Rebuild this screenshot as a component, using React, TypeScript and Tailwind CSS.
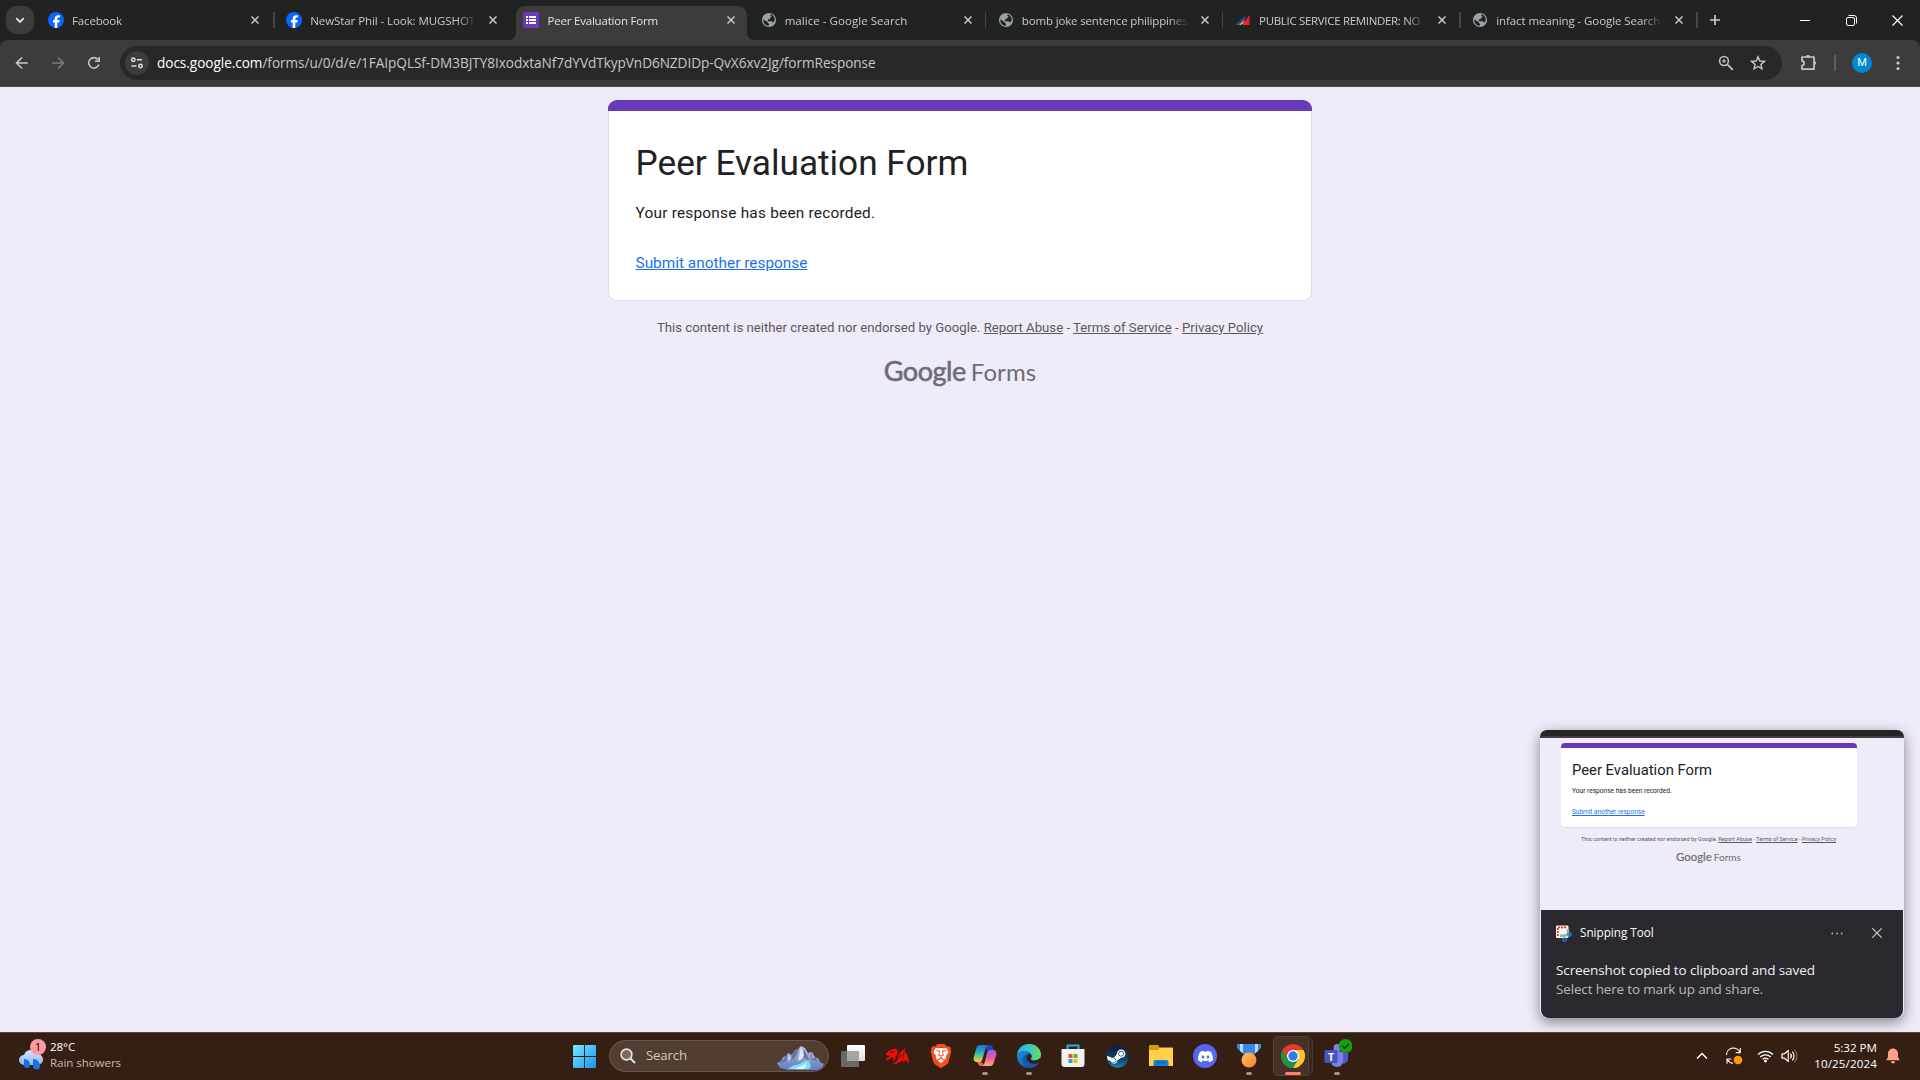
import React from "react";
import { SiBrave, SiDiscord } from "react-icons/si";
import { FaSteam } from "react-icons/fa";

const UI = "font-['Open_Sans','Noto_Sans',sans-serif]";

function FacebookIcon() {
  return (
    <svg width="16" height="16" viewBox="0 0 16 16">
      <circle cx="8" cy="8" r="8" fill="#0866ff" />
      <path d="M6.7 15.9v-5.4H5V8.1h1.7V7c0-2.6 1.1-3.8 3.6-3.8.5 0 1.2.1 1.6.2v2.1c-.2 0-.5 0-.9 0-1.2 0-1.7.5-1.7 1.7v.9h2.4l-.4 2.4h-2v5.4z" fill="#fff" />
    </svg>
  );
}

function FormsIcon() {
  return (
    <svg width="16" height="16" viewBox="0 0 16 16">
      <rect width="16" height="16" rx="1" fill="#673ab7" />
      <path d="M3 4h2v2H3zM6 4h7v2H6zM3 7h2v2H3zM6 7h7v2H6zM3 10h2v2H3zM6 10h7v2H6z" fill="#fff" />
    </svg>
  );
}

function GlobeIcon() {
  return (
    <svg width="16" height="16" viewBox="0 0 16 16">
      <circle cx="8" cy="8" r="7.1" fill="#9aa0a6" />
      <path d="M2.3 7.2 5 9.3c.8.6 1.8.3 1.8 1.2 0 .8.5 1 1.1 1.1v2.2C4.7 13.7 1.9 11.2 2.3 7.2zM9.6 2.3c2.5.7 4 2.7 4.2 5.2-.3 1.6-1.2 2.7-1.9 3.1-.5-.9-.8-1.4-1.9-1.4H7.8c-.6 0-1.1-.4-1-1 0-.6.5-.9 1.1-.9.7 0 .9-.4.9-.9 0-.7.6-.8 1.2-1 .7-.3.5-1.1-.1-1.4-.6-.3-.9-.9-.3-1.7z" fill="#202322" />
    </svg>
  );
}

function PalIcon() {
  return (
    <svg width="16" height="16" viewBox="0 0 16 16">
      <path d="M0 13 10 4v5l-5 4z" fill="#35459c" />
      <path d="M7 13l7.500-10v10z" fill="#ee2030" />
      <path d="M4 13l5-4.500L8.500 11l-3 2z" fill="#f9c83a" />
    </svg>
  );
}

function CloseGlyph() {
  return (
    <svg width="8" height="8" viewBox="0 0 8 8" stroke="#c7c9c8" strokeWidth="1.5">
      <path d="M.5.5l7 7M7.5.5l-7 7" />
    </svg>
  );
}

type TabInfo = { icon: React.ReactNode; title: string; track: string; pad?: string; active?: boolean; sep?: boolean };

const tabs: TabInfo[] = [
  { icon: <FacebookIcon />, title: "Facebook", track: "tracking-[-0.15px]", pad: "pl-[10.5px]", sep: true },
  { icon: <FacebookIcon />, title: "NewStar Phil - Look: MUGSHOT", track: "tracking-[-0.08px]" },
  { icon: <FormsIcon />, title: "Peer Evaluation Form", track: "tracking-[-0.2px]", active: true },
  { icon: <GlobeIcon />, title: "malice - Google Search", track: "tracking-[0.05px]", sep: true },
  { icon: <GlobeIcon />, title: "bomb joke sentence philippines", track: "tracking-[-0.16px]", sep: true },
  { icon: <PalIcon />, title: "PUBLIC SERVICE REMINDER: NO", track: "tracking-[-0.32px]", sep: true },
  { icon: <GlobeIcon />, title: "infact meaning - Google Search", track: "tracking-[-0.08px]", sep: true },
];

function Tab({ icon, title, track, pad, active, sep }: TabInfo) {
  return (
    <div className="relative h-[40px] w-[237.2px] shrink-0">
      {active && (
        <svg className="absolute left-[-4px] top-[6px]" width="247" height="34" viewBox="0 0 247 34">
          <path d="M0 34c5 0 8-3 8-8V10C8 4 12 0 18 0h211c6 0 10 4 10 10v16c0 5 3 8 8 8z" fill="#3c3c3c" />
        </svg>
      )}
      <div className={`relative flex h-[40px] items-center ${pad ?? "pl-[11.6px]"}`}>
        <span className="w-4 shrink-0">{icon}</span>
        <span className={`ml-2 mt-[2px] w-[167px] shrink-0 whitespace-nowrap text-[11.5px] leading-[18px] ${track} ${active ? "text-[#e3e3e3]" : "text-[#c9cbca]"} [mask-image:linear-gradient(to_right,#000_88%,transparent)]`}>
          {title}
        </span>
        <span className="ml-[12.2px]"><CloseGlyph /></span>
      </div>
      {sep && <span className="absolute right-0 top-3 h-4 w-[1.5px] bg-[#454746]" />}
    </div>
  );
}

function TabStrip() {
  return (
    <div className="flex h-[40px] items-center bg-[#202322]">
      <div className="ml-[6px] mr-[3.5px] flex h-7 w-7 shrink-0 items-center justify-center rounded-[10px] bg-[#3c3c3c]">
        <svg width="10" height="10" viewBox="0 0 10 10" fill="none" stroke="#e3e3e3" strokeWidth="1.8"><path d="M1.2 3.2 5 7l3.800-3.800" /></svg>
      </div>
      {tabs.map((t) => <Tab key={t.title} {...t} />)}
      <svg className="ml-[12px] shrink-0" width="10" height="10" viewBox="0 0 10 10" stroke="#d0d2d1" strokeWidth="1.6"><path d="M5 0v10M0 5h10" /></svg>
      <div className="ml-auto flex shrink-0 items-center">
        <div className="flex w-[46px] justify-center"><span className="h-px w-[10px] bg-white" /></div>
        <div className="flex w-[46px] justify-center">
          <svg width="11" height="11" viewBox="0 0 11 11" fill="none" stroke="#fff"><rect x=".5" y="2.5" width="8" height="8" rx="1.5" /><path d="M2.500.5H8A2.500 2.500 0 0 1 10.500 3v5.500" /></svg>
        </div>
        <div className="flex w-[46px] justify-center">
          <svg width="11" height="11" viewBox="0 0 11 11" stroke="#fff" strokeWidth="1.1"><path d="M.5.5l10 10M10.500.5l-10 10" /></svg>
        </div>
      </div>
    </div>
  );
}

function Toolbar() {
  return (
    <div className="bg-[#202322]">
      <div className="flex h-[47px] items-center rounded-t-[8px] border-b border-[#4b4b4b] bg-[#3c3c3c]">
        <svg className="ml-[14px]" width="16" height="16" viewBox="0 0 16 16" fill="none" stroke="#c7c7c7" strokeWidth="1.6"><path d="M13.800 8H3M8 2.500 2.500 8 8 13.500" /></svg>
        <svg className="ml-5" width="16" height="16" viewBox="0 0 16 16" fill="none" stroke="#7b7b7b" strokeWidth="1.6"><path d="M2.200 8H13M8 2.500 13.500 8 8 13.500" /></svg>
        <svg className="ml-5" width="16" height="16" viewBox="0 0 16 16" fill="none" stroke="#c7c7c7" strokeWidth="1.6"><path d="M12.800 9.500A5.200 5.200 0 1 1 12 4.700" /><path d="M13.200 2v4.200H9" /></svg>
        <div className="ml-[18px] flex h-[34px] w-[1662px] items-center rounded-full bg-[#282828] pl-[5px]">
          <span className="flex h-6 w-6 items-center justify-center rounded-full bg-[#3c3c3c]">
            <svg width="14" height="14" viewBox="0 0 14 14" fill="none" stroke="#dedede" strokeWidth="1.5"><circle cx="3.300" cy="3.800" r="1.700" /><path d="M6.800 3.800H12M1.500 10h5" /><circle cx="10.500" cy="10" r="1.700" /></svg>
          </span>
          <span className="ml-2 whitespace-nowrap text-[13.6px] leading-5 tracking-[-0.045px] text-[#c7c7c7]">
            <span className="text-white">docs.google.com</span>/forms/u/0/d/e/1FAIpQLSf-DM3BJTY8IxodxtaNf7dYVdTkypVnD6NZDIDp-QvX6xv2Jg/formResponse
          </span>
          <svg className="ml-auto" width="16" height="16" viewBox="0 0 16 16" fill="none" stroke="#c7c7c7" strokeWidth="1.5"><circle cx="6" cy="6" r="4.4" /><path d="M9.300 9.300 14.800 14.800" strokeWidth="1.8" /><path d="M6 4v4M4 6h4" strokeWidth="1.2" /></svg>
          <svg className="ml-4 mr-4" width="16" height="16" viewBox="0 0 16 16" fill="none" stroke="#c7c7c7" strokeWidth="1.4"><path d="M8 1.800l1.800 4.200 4.600.4-3.500 3 1.100 4.500L8 11.500l-4 2.400 1.100-4.500-3.500-3L6.200 6z" /></svg>
        </div>
        <svg className="ml-[18px]" width="18" height="18" viewBox="0 0 18 18" fill="none" stroke="#c7c7c7" strokeWidth="1.7"><path d="M2 3h12v12.200H2v-3.700c2.800-.2 2.800-4.400 0-4.600z" strokeLinejoin="round" /><path d="M6 3a2 2 0 0 1 4 0zM14 7a2 2 0 0 1 0 4z" fill="#c7c7c7" stroke="none" /></svg>
        <span className="ml-[16px] h-4 w-[2px] bg-[#5f5f5f]" />
        <span className="ml-4 flex h-5 w-5 items-center justify-center rounded-full bg-[#0288d1] font-[Roboto] text-[11px] text-white">M</span>
        <svg className="ml-[24px]" width="4" height="16" viewBox="0 0 4 16" fill="#c7c7c7"><circle cx="2" cy="2.5" r="1.6" /><circle cx="2" cy="8" r="1.6" /><circle cx="2" cy="13.5" r="1.6" /></svg>
      </div>
    </div>
  );
}

function FormsPage() {
  return (
    <main className="flex flex-1 flex-col items-center bg-[#f0ebf8] pt-[13px] font-[Roboto]">
      <section className="h-[201px] w-[704px] overflow-hidden rounded-[9px]">
        <div className="h-[11px] bg-[#673ab7]" />
        <div className="flex h-[190px] flex-col rounded-b-[9px] border border-t-0 border-[#dadce0] bg-white px-[26.5px]">
          <h1 className="mt-[29px] text-[35.2px] leading-[46px] text-[#202124]">Peer Evaluation Form</h1>
          <p className="mt-[16px] text-[15.4px] leading-[22px] tracking-[0.22px] text-[#202124]">Your response has been recorded.</p>
          <p className="mt-7 text-[15.4px] leading-[22px] text-[#1a73e8] underline">Submit another response</p>
        </div>
      </section>
      <p className="mt-[18px] text-[13.2px] leading-[18px] text-[#5b575f]">
        This content is neither created nor endorsed by Google. <span className="underline">Report Abuse</span> - <span className="underline">Terms of Service</span> - <span className="underline">Privacy Policy</span>
      </p>
      <div className="mt-[16px] flex h-[36px] items-baseline text-[#6f6b75]">
        <span className="font-[Lato] text-[27px] leading-[36px] tracking-[-0.45px] [-webkit-text-stroke:0.6px_#6f6b75]">Google</span>
        <span className="ml-[5px] font-[Lato] text-[24px] leading-[36px] tracking-[0.1px]">Forms</span>
      </div>
    </main>
  );
}

function Toast() {
  return (
    <aside className="absolute left-[1540px] top-[730px] w-[364px] rounded-[8px] shadow-[0_4px_14px_rgba(0,0,0,0.45)]">
      <div className="flex h-[180px] flex-col overflow-hidden rounded-t-[7px] bg-[#f0ebf8] font-[Roboto]">
        <div className="h-2 shrink-0 border-b-[2px] border-[#3f3f3f] bg-[#232625]" />
        <div className="ml-[21px] mt-[5px] h-[85px] w-[296px] shrink-0 overflow-hidden rounded-[4px] border-b border-[#dddde4] bg-white">
          <div className="h-[5px] bg-[#673ab7]" />
          <div className="pl-[11px]">
            <div className="mt-[12px] text-[14.8px] leading-[20px] text-[#202124]">Peer Evaluation Form</div>
            <div className="mt-[6px] text-[6.6px] leading-[10px] text-[#202124]">Your response has been recorded.</div>
            <div className="mt-[11px] text-[6.5px] leading-[10px] text-[#1a73e8] underline">Submit another response</div>
          </div>
        </div>
        <div className="ml-[41px] mt-[7px] whitespace-nowrap text-[5.55px] leading-[8px] text-[#5b575f]">
          This content is neither created nor endorsed by Google. <span className="underline">Report Abuse</span> - <span className="underline">Terms of Service</span> - <span className="underline">Privacy Policy</span>
        </div>
        <div className="ml-[136px] mt-[6px] flex items-baseline whitespace-nowrap font-[Lato] leading-[16px] text-[#6f6b75]">
          <span className="text-[11.4px] [-webkit-text-stroke:0.2px_#6f6b75]">Google</span><span className="ml-[2px] text-[10px]">Forms</span>
        </div>
      </div>
      <div className="mx-px h-[108px] rounded-b-[8px] bg-[#2b282f] px-[15px] pt-[13px]">
        <div className="flex h-5 items-center">
          <svg width="16" height="17" viewBox="0 0 16 17"><rect width="12.5" height="12.5" y=".5" rx="1" fill="#f3f3f3" /><path d="M1.800 11V2.300H11" fill="none" stroke="#d83b01" strokeWidth="1.7" strokeDasharray="2 1" /><path d="M4 11l8-1V4" fill="none" stroke="#a8a8ac" strokeWidth="2.5" /><circle cx="13.500" cy="9.500" r="1.700" fill="none" stroke="#1490df" strokeWidth="1.3" /><circle cx="8.500" cy="14.500" r="1.700" fill="none" stroke="#1490df" strokeWidth="1.3" /></svg>
          <span className="ml-2 text-[11.7px] text-white">Snipping Tool</span>
          <svg className="ml-auto" width="12" height="3" viewBox="0 0 12 3" fill="#b5b4b7"><circle cx="1.300" cy="1.500" r=".9" /><circle cx="6" cy="1.500" r=".9" /><circle cx="10.700" cy="1.500" r=".9" /></svg>
          <svg className="ml-[29px] mr-[6px]" width="10" height="10" viewBox="0 0 10 10" stroke="#cfced1" strokeWidth="1.2"><path d="M.3.3l9.400 9.400M9.700.3.3 9.700" /></svg>
        </div>
        <div className="mt-[18px] text-[13.5px] leading-[19px] tracking-[-0.1px] text-[#f1f1f2]">Screenshot copied to clipboard and saved</div>
        <div className="text-[13.5px] leading-[19px] tracking-[-0.16px] text-[#b9b8bb]">Select here to mark up and share.</div>
      </div>
    </aside>
  );
}

function Weather() {
  return (
    <div className="flex w-[200px] items-center pb-[2px] pl-[18px]">
      <div className="relative h-[32px] w-[28px]">
        <svg width="28" height="32" viewBox="0 0 28 32">
          <defs><linearGradient id="cloud" x2="0" y2="1"><stop stopColor="#d9e6fb" /><stop offset="1" stopColor="#8fb4ee" /></linearGradient></defs>
          <path d="M6 26a5 5 0 0 1 0-10 7 7 0 0 1 13-1 5.500 5.500 0 0 1 1 11z" fill="url(#cloud)" />
          <path d="M6 20c4 0 6 3 6 6a3 3 0 0 1-6 0zM15 20c5 0 7 4 7 7a3.300 3.300 0 0 1-7 0z" fill="#1473e6" />
        </svg>
        <span className="absolute left-[12px] top-0 flex h-4 w-4 items-center justify-center rounded-full bg-[#ff99a4] text-[11px] text-black">1</span>
      </div>
      <div className="ml-[4px] whitespace-nowrap text-[11.6px] leading-[16px] tracking-[-0.08px]">
        <div className="text-white">28°C</div>
        <div className="text-[#c2bbb8]">Rain showers</div>
      </div>
    </div>
  );
}

function Cell({ children, run, wide }: { children: React.ReactNode; run?: boolean; wide?: boolean }) {
  return (
    <div className="relative flex h-10 w-10 items-center justify-center">
      {wide && <span className="absolute left-[6px] top-0 h-10 w-[34px] rounded-[5px] border border-[#4a392f] bg-[#3b271b]" />}
      {wide && <span className="absolute left-0 top-0 h-10 w-[36px] rounded-[5px] border border-[#55433a] bg-[#453126]" />}
      <div className="relative">{children}</div>
      {run && <span className="absolute bottom-px left-[17px] h-[3px] w-[6px] rounded-full bg-[#9d938e]" />}
      {wide && <span className="absolute bottom-px left-3 h-[3px] w-4 rounded-full bg-[#ff8168]" />}
    </div>
  );
}

function TaskIcons() {
  return (
    <div className="flex items-center gap-1">
      <Cell>
        <svg width="24" height="24" viewBox="0 0 24 24"><defs><linearGradient id="tv" x2="0" y2="1"><stop stopColor="#fff" /><stop offset="1" stopColor="#dedede" /></linearGradient></defs><rect x="6" y="1" width="18" height="16" rx="1" fill="url(#tv)" /><rect y="7" width="18" height="16" rx="1" fill="#6b6967" /><path d="M6 7h12v10H6z" fill="#a6a5a4" /></svg>
      </Cell>
      <Cell>
        <svg width="24" height="24" viewBox="0 0 24 24" fill="#f40b0b"><path d="M.5 10 3 7.500 5.500 6 12 4l-2 1.800 4-.3-2.500 1.800 2.800 1.200-2.600.7 1.500 2.500-2.200-.7-.5 4-2.500 2.500 1-3.500-2.500-.5L3 16l-2.500.5 2-3 3.500-1.500-3.500-.5zM14 10l2.500-3L21 4l-1.500 3.500 2.500 3 1.500 4L24 20l-2.500-3.500-1.500-.5-1 3-1.500-3-2 1.500L11 20l-5-1 4-.5 3-3z" /><path d="M5 8.500l3.500-1-1 1.400zM16 9.500l-1 4.500M19 8l-1 7" fill="none" stroke="#351f13" strokeWidth=".8" /></svg>
      </Cell>
      <Cell>
        <div className="relative h-6 w-6">
          <svg className="absolute left-0 top-0" width="24" height="24" viewBox="0 0 24 24"><path d="M6 4h12l2 5-3 9-5 4-5-4-3-9z" fill="#fff" /></svg>
          <SiBrave className="absolute left-0 top-0 h-6 w-6 text-[#ff4a1c]" />
        </div>
      </Cell>
      <Cell run>
        <svg width="24" height="24" viewBox="0 0 24 24">
          <defs>
            <linearGradient id="cpa" x2="0" y2="1"><stop stopColor="#1a6fe0" /><stop offset=".45" stopColor="#25b3c0" /><stop offset="1" stopColor="#f1d43a" /></linearGradient>
            <linearGradient id="cpb" x2="0" y2="1"><stop stopColor="#a05bf0" /><stop offset=".5" stopColor="#e75aa0" /><stop offset="1" stopColor="#ffb07a" /></linearGradient>
          </defs>
          <path d="M14 1h3c2 0 2.500 1.500 3 3l1 3h-5c-2 0-3-2-3.500-4z" fill="#1b46b8" />
          <path d="M7 1h8c-2 1-2.500 3-3 5L9.500 15c-.5 2-1.500 3-3 3H4c-3 0-4-2.500-3.200-5L3 5c.8-2.500 2-4 4-4z" fill="url(#cpa)" />
          <path d="M17 22H9c2-1 2.500-3 3-5l2-8c.5-2 1.500-3 3-3H20c3 0 4 2.500 3.200 5L21 18c-.8 2.500-2 4-4 4z" fill="url(#cpb)" />
          <path d="M10 22H8c-2 0-2.500-1.500-3-2.500l-.8-1.500H7c2 0 3 1 3.500 2.500z" fill="#f36a3a" />
        </svg>
      </Cell>
      <Cell run>
        <svg width="24" height="24" viewBox="0 0 24 24">
          <defs>
            <linearGradient id="eg1"><stop stopColor="#28a8e8" /><stop offset=".5" stopColor="#35c9c4" /><stop offset="1" stopColor="#6cdd52" /></linearGradient>
            <linearGradient id="eg2" x2="1" y2="1"><stop stopColor="#1b9de2" /><stop offset="1" stopColor="#0f4a9c" /></linearGradient>
          </defs>
          <circle cx="12" cy="12" r="12" fill="url(#eg2)" />
          <path d="M.2 10C1.200 4 6 0 12 0c7 0 12 5 12 10.500 0 3.500-3 6-6.500 6-2.300 0-3.800-.8-3.800-1.600 0-.6 1-1 1-2.700C14.700 9 11 7 7.500 7 4.500 7 1.500 8.200.2 10z" fill="url(#eg1)" />
          <path d="M14.700 12.200c0 1.700-1 2.100-1 2.700 0 .8 1.500 1.600 3.800 1.600 2 0 4-.8 5.200-2.200l1.300.7-1.500 3.500c-1.500 1.500-9 2.500-12-1.500-2-3-1-6 1.500-7.500 1.500.2 2.700 1.500 2.700 2.700z" fill="#351f13" />
          <path d="M9 13c0 5 4 7.500 8 7.500 2 0 4-1 5.200-2A12 12 0 0 1 12 24c-4 0-7-4-6.500-8C6 12.500 8 10 12 9.500 10 10 9 11.500 9 13z" fill="#1459ae" />
        </svg>
      </Cell>
      <Cell>
        <svg width="24" height="24" viewBox="0 0 24 24"><path d="M6.500 6V1.500h11V6" fill="none" stroke="#25b2f1" strokeWidth="2" strokeLinejoin="round" /><path d="M.5 5h23v15a3 3 0 0 1-3 3h-17a3 3 0 0 1-3-3z" fill="#f1f1f1" /><path d="M7.500 10h4v4h-4z" fill="#f25022" /><path d="M12.500 10h4v4h-4z" fill="#6bb022" /><path d="M7.500 15h4v4h-4z" fill="#1ba1e8" /><path d="M12.500 15h4v4h-4z" fill="#ffb902" /></svg>
      </Cell>
      <Cell>
        <div className="relative h-[23px] w-[23px]">
          <svg width="0" height="0" className="absolute"><defs><linearGradient id="steam" x2="0" y2="1"><stop stopColor="#111d3e" /><stop offset=".6" stopColor="#0c3f68" /><stop offset="1" stopColor="#1487b8" /></linearGradient></defs></svg>
          <span className="absolute inset-[1px] rounded-full bg-white" />
          <FaSteam className="absolute inset-0 h-[23px] w-[23px] fill-[url(#steam)]" />
        </div>
      </Cell>
      <Cell>
        <svg width="24" height="24" viewBox="0 0 24 24"><path d="M0 2a1 1 0 0 1 1-1h8l2 3v5H0z" fill="#d99b0b" /><path d="M0 6h9l2-2.500h12a1 1 0 0 1 1 1V22H0z" fill="#ffd04a" /><path d="M4.500 22v-4a2 2 0 0 1 2-2h11a2 2 0 0 1 2 2v4z" fill="#1484d0" /><path d="M8 18.500h8" stroke="#0b5c9c" strokeWidth="1.2" /></svg>
      </Cell>
      <Cell>
        <span className="flex h-6 w-6 items-center justify-center rounded-full bg-[#5865f2]"><SiDiscord className="h-[15px] w-[15px] text-white" /></span>
      </Cell>
      <Cell run>
        <svg width="24" height="24" viewBox="0 0 24 24"><defs><linearGradient id="md" x2="1" y2="1"><stop stopColor="#ffc45c" /><stop offset="1" stopColor="#f07f32" /></linearGradient></defs><path d="M0 0h24v4l-6 6H6L0 4z" fill="#3b86ea" /><path d="M3 0h3v9L3 7zM18 0h3v7l-3 2z" fill="#b8dcfb" /><circle cx="12" cy="16" r="7.5" fill="url(#md)" /></svg>
      </Cell>
      <Cell wide>
        <svg width="24" height="24" viewBox="0 0 24 24">
          <circle cx="12" cy="12" r="12" fill="#e33b2e" />
          <path d="M12 6h10.390A12 12 0 0 1 12 24l5.200-9z" fill="#fcc934" />
          <path d="M6.800 15 1.610 6A12 12 0 0 0 12 24l5.200-9z" fill="#1e9446" />
          <circle cx="12" cy="12" r="6" fill="#fff" /><circle cx="12" cy="12" r="4.7" fill="#2f7de9" />
        </svg>
      </Cell>
      <Cell run>
        <svg className="-mt-[6px]" width="30" height="30" viewBox="0 0 30 30">
          <circle cx="15.500" cy="10" r="4" fill="#7b83eb" /><path d="M18 15h8v7a4.500 4.500 0 0 1-8 2z" fill="#5059c9" /><path d="M9 14h12v9a6 6 0 0 1-12 0z" fill="#7b83eb" />
          <rect x="2.500" y="12" width="13" height="13" rx="1.500" fill="#4b53bc" />
          <text x="9" y="22.500" textAnchor="middle" fontSize="10.500" fontWeight="700" fill="#fff" fontFamily="Open Sans, sans-serif">T</text>
          <circle cx="23.500" cy="8" r="7" fill="#13a10e" /><path d="M20.500 8l2.200 2.200L26.800 6" fill="none" stroke="#0b2b0a" strokeWidth="1.5" />
        </svg>
      </Cell>
    </div>
  );
}

function Taskbar() {
  return (
    <footer className="flex h-12 items-center border-t border-[#574842] bg-[#351f13] pb-px">
      <Weather />
      <svg className="ml-[373px]" width="23" height="23" viewBox="0 0 23 23"><defs><linearGradient id="win" gradientUnits="userSpaceOnUse" x1="0" y1="0" x2="23" y2="23"><stop stopColor="#7ce8ff" /><stop offset="1" stopColor="#1296f5" /></linearGradient></defs><path d="M0 1a1 1 0 0 1 1-1h10v11H0zM12 0h10a1 1 0 0 1 1 1v10H12zM0 12h11v11H1a1 1 0 0 1-1-1zM12 12h11v10a1 1 0 0 1-1 1H12z" fill="url(#win)" /></svg>
      <div className="ml-[13px] mr-1 flex h-8 w-[220px] items-center rounded-full border border-[#6a564a] bg-[#513d32] pl-[10px] pr-1">
        <svg width="16" height="16" viewBox="0 0 16 16" fill="#796c65" stroke="#e8e4e2" strokeWidth="1.6"><circle cx="6.500" cy="6.500" r="5.400" /><path d="M10.500 10.500l4.500 4.500" strokeWidth="2" /></svg>
        <span className="ml-[10px] text-[13.3px] tracking-[-0.2px] text-[#d2cbc7]">Search</span>
        <svg className="ml-auto mt-[3px]" width="48" height="24" viewBox="0 0 48 24">
          <defs><linearGradient id="mt" x2="0" y2="1"><stop stopColor="#c3cce8" /><stop offset=".5" stopColor="#8d9bcb" /><stop offset="1" stopColor="#5a82c8" /></linearGradient></defs>
          <path d="M1 17l4-2 2-4 3-1 2-3 4 2 3-5 3-1 3-3 4 2 3 5 4-1 3 5 4 2 1 3 4 2-2 4-5 2H12l-8-2z" fill="url(#mt)" />
          <path d="M24 1l-4 9-5 5 2-9zM12 7l-2 8-6 3 4-5zM35 7l1 7 5 1-2-4zM28 3l-1 8 6 3z" fill="#65749f" />
          <path d="M25 1l3 8-2 4-4 2zM12.500 8l2 4-2 4zM36 8l2 3-1 2z" fill="#dfe6f5" />
          <path d="M12 23c5-5 9-3 13-6 3-2 5-3 9-2-3 2 4 4-1 8z" fill="#7fe0f2" /><path d="M19 23c4-3 8-2 11-6-1 3 1 4-3 6z" fill="#e4fbff" />
        </svg>
      </div>
      <TaskIcons />
      <div className="ml-auto flex items-center pr-[20px]">
        <svg width="12" height="8" viewBox="0 0 12 8" fill="none" stroke="#fff" strokeWidth="1.5"><path d="M1 6.500 6 1.500l5 5" /></svg>
        <svg className="ml-[17px]" width="18" height="18" viewBox="0 0 18 18" fill="none" stroke="#f2efee" strokeWidth="1.2"><path d="M1.500 8A7 7 0 0 1 15 5.500M15.300 1v4.700h-4.600M8 16.300A7 7 0 0 1 2.500 12.500M2 16.800V12h4.600" /><circle cx="13" cy="13" r="4.3" fill="#ff9a0a" stroke="none" /></svg>
        <svg className="ml-[14px]" width="17" height="14" viewBox="0 0 17 14" fill="none" stroke="#fff" strokeWidth="1.3"><path d="M1 5.500a10.500 10.500 0 0 1 15 0M3.300 8a7.300 7.300 0 0 1 10.400 0M5.600 10.300a4.100 4.100 0 0 1 5.800 0" /><circle cx="8.500" cy="12" r="1.500" fill="#fff" stroke="none" /></svg>
        <svg className="ml-[7px]" width="17" height="14" viewBox="0 0 17 14" fill="none" stroke="#fff" strokeWidth="1.2"><path d="M1 4.800h2.500L7.200 1.500v11L3.500 9.200H1z" strokeLinejoin="round" /><path d="M9.300 4.700a3.300 3.300 0 0 1 0 4.600M11.300 2.700a6.200 6.200 0 0 1 0 8.600" /><path d="M13.500.8a9 9 0 0 1 0 12.400" stroke="#7d706a" /></svg>
        <div className="ml-[8px] w-[71px] whitespace-nowrap pb-px text-right text-[11.6px] leading-[16px] text-white">
          <div>5:32 PM</div>
          <div className="-ml-2 tracking-[0.12px]">10/25/2024</div>
        </div>
        <svg className="ml-[9px]" width="14" height="16" viewBox="0 0 14 16" fill="#ffa184"><path d="M2 5.500a5 5 0 0 1 10 0V9l1.800 3.300H.2L2 9zM4.800 13.300h4.400a2.200 2.200 0 0 1-4.400 0z" /></svg>
      </div>
    </footer>
  );
}

export default function App() {
  return (
    <div className={`relative flex h-[1080px] w-[1920px] flex-col overflow-hidden ${UI}`}>
      <TabStrip />
      <Toolbar />
      <FormsPage />
      <Taskbar />
      <Toast />
    </div>
  );
}
